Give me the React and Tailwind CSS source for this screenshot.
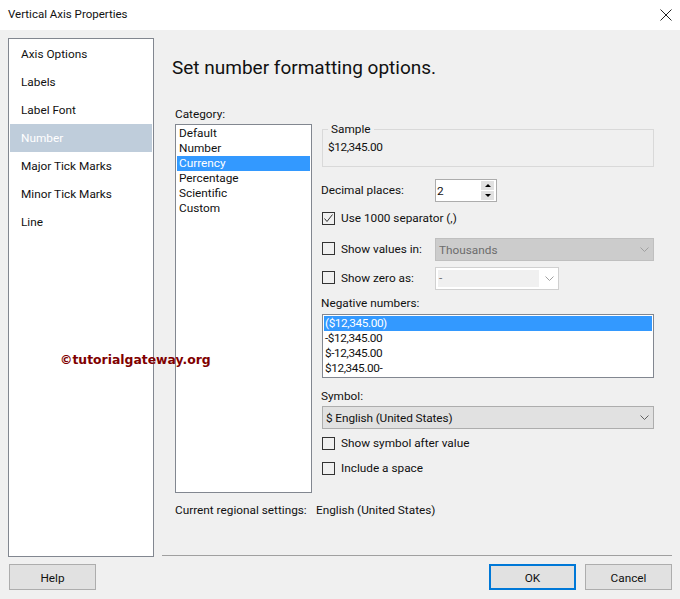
const navItems = ['Axis Options', 'Labels', 'Label Font', 'Number', 'Major Tick Marks', 'Minor Tick Marks', 'Line'];
const categories = ['Default', 'Number', 'Currency', 'Percentage', 'Scientific', 'Custom'];
const negatives = ['($12,345.00)', '-$12,345.00', '$-12,345.00', '$12,345.00-'];

function Chevron({ color = '#606060' }) {
  return (
    <svg width="9" height="5" viewBox="0 0 9 5" fill="none" stroke={color} strokeWidth="1">
      <path d="M0.5 0.5 L4.5 4.5 L8.5 0.5" />
    </svg>
  );
}

function Check({ checked, label, className }) {
  return (
    <div className={`flex items-center gap-[6px] pl-px ${className}`}>
      <span className="w-[13px] h-[13px] border border-[#333333] bg-[#f0f0f0] flex items-center justify-center shrink-0">
        {checked ? (
          <svg width="11" height="11" viewBox="0 0 11 11" fill="none" stroke="#333333" strokeWidth="1">
            <path d="M1.5 5.5 L4 8.5 L9.5 1.5" />
          </svg>
        ) : null}
      </span>
      <span>{label}</span>
    </div>
  );
}

function Select({ value, chevron, className }) {
  return (
    <div className={`h-[23px] border flex items-center justify-between pl-[3px] pr-[4px] ${className}`}>
      <span>{value}</span>
      <Chevron color={chevron} />
    </div>
  );
}

function Button({ children, primary }) {
  return (
    <div
      className={`w-[87px] h-[26px] pt-px flex items-center justify-center bg-[#e1e1e1] ${
        primary ? 'border-2 border-[#0078d7]' : 'border border-[#adadad]'
      }`}
    >
      {children}
    </div>
  );
}

export default function App() {
  return (
    <div className="relative w-[680px] h-[599px] bg-[#f0f0f0] text-[#111111] text-[11.8px] leading-[16px] font-['Roboto',sans-serif] overflow-hidden">
      <div className="h-[30px] bg-white flex items-center justify-between pl-[8px] pr-[8px]">
        <span className="text-[11.5px] mb-[2px]">Vertical Axis Properties</span>
        <svg width="12" height="12" viewBox="0 0 12 12" fill="none" stroke="#222222" strokeWidth="1">
          <path d="M0.5 0.5 L11.5 11.5 M11.5 0.5 L0.5 11.5" />
        </svg>
      </div>

      <div className="flex pt-[8px] pl-[8px]">
        <div className="w-[146px] h-[519px] bg-white border border-[#828790] p-px">
          {navItems.map((item) => (
            <div
              key={item}
              className={`h-[28px] flex items-center pl-[11px] ${item === 'Number' ? 'bg-[#bfcddb] text-white' : ''}`}
            >
              {item}
            </div>
          ))}
        </div>

        <div className="ml-[8px] w-[510px] flex flex-col">
          <div className="mt-[18px] h-[24px] pl-[10px] flex items-center text-[19px]">Set number formatting options.</div>

          <div className="mt-[26px] flex pl-[13px]">
            <div className="w-[137px]">
              <div className="h-[18px]">Category:</div>
              <div className="h-[369px] bg-white border border-[#828790] p-px">
                {categories.map((item) => (
                  <div
                    key={item}
                    className={`h-[15px] leading-[15px] pl-[2px] ${item === 'Currency' ? 'bg-[#3399ff] text-white' : ''}`}
                  >
                    {item}
                  </div>
                ))}
              </div>
            </div>

            <div className="ml-[9px] w-[333px] pt-[15px]">
              <fieldset className="ml-px h-[46px] border border-[#d9d9d9] pl-[5px]">
                <legend className="px-[3px] leading-[16px]">Sample</legend>
                <div className="mt-[2px] tracking-[-0.4px]">$12,345.00</div>
              </fieldset>

              <div className="mt-[12px] h-[23px] flex items-center">
                <span className="w-[114px] mb-[2px]">Decimal places:</span>
                <div className="w-[62px] h-[23px] bg-white border border-[#acacac] flex items-center justify-between pl-px pr-[2px]">
                  <span>2</span>
                  <div className="w-[13px] flex flex-col gap-px">
                    <div className="h-[9px] bg-[#e1e1e1] flex items-center justify-center">
                      <div className="w-0 h-0 border-x-[3px] border-x-transparent border-b-[3px] border-b-black" />
                    </div>
                    <div className="h-[9px] bg-[#e1e1e1] flex items-center justify-center">
                      <div className="w-0 h-0 border-x-[3px] border-x-transparent border-t-[3px] border-t-black" />
                    </div>
                  </div>
                </div>
              </div>

              <Check checked label="Use 1000 separator (,)" className="mt-[5px] h-[22px]" />

              <div className="mt-[9px] flex items-center">
                <Check label="Show values in:" className="w-[114px] mb-[2px]" />
                <Select value="Thousands" chevron="#a0a0a0" className="w-[219px] bg-[#cccccc] border-[#bfbfbf] text-[#6d6d6d]" />
              </div>

              <div className="mt-[6px] flex items-center">
                <Check label="Show zero as:" className="w-[114px] mb-[2px]" />
                <div className="w-[124px] h-[23px] bg-white border border-[#d0d0d0] flex items-center justify-between pl-[2px] pr-[4px]">
                  <span className="w-[101px] h-[17px] bg-[#f0f0f0] pl-px text-[#6d6d6d]">-</span>
                  <Chevron color="#a0a0a0" />
                </div>
              </div>

              <div className="mt-[5px] h-[16px]">Negative numbers:</div>
              <div className="mt-[3px] ml-px h-[64px] bg-white border border-[#828790] p-px">
                {negatives.map((item, i) => (
                  <div
                    key={item}
                    className={`h-[15px] leading-[15px] pl-px tracking-[-0.4px] ${i === 0 ? 'bg-[#3399ff] text-white' : ''}`}
                  >
                    {item}
                  </div>
                ))}
              </div>

              <div className="mt-[10px] h-[16px]">Symbol:</div>
              <Select
                value="$ English (United States)"
                className="mt-[2px] ml-px w-[332px] bg-[#e1e1e1] border-[#adadad] tracking-[-0.1px]"
              />

              <Check label="Show symbol after value" className="mt-[6px] h-[16px]" />
              <Check label="Include a space" className="mt-[9px] h-[16px]" />
            </div>
          </div>

          <div className="mt-[9px] pl-[13px] flex h-[16px]">
            <span className="w-[141px] whitespace-nowrap">Current regional settings:</span>
            <span>English (United States)</span>
          </div>
        </div>
      </div>

      <div className="mt-[-2px] ml-[162px] w-[510px] h-px bg-[#a0a0a0]" />

      <div className="mt-[8px] px-[8px] flex justify-between">
        <div className="pl-px">
          <Button>Help</Button>
        </div>
        <div className="flex gap-[9px]">
          <Button primary>OK</Button>
          <Button>Cancel</Button>
        </div>
      </div>

      <div className="absolute left-[60px] top-[352px] text-[12.4px] font-bold text-[#800000] font-['DejaVu_Sans',sans-serif]">
        ©tutorialgateway.org
      </div>
    </div>
  );
}
